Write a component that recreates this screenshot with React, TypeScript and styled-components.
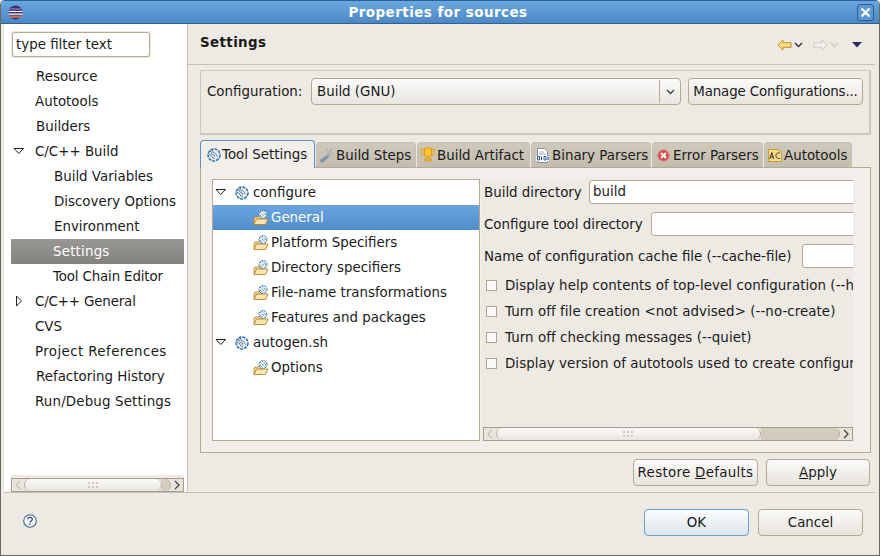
import React from 'react';
import styled, { createGlobalStyle } from 'styled-components';

const GlobalStyle = createGlobalStyle`
  html, body {
    margin: 0;
    padding: 0;
    background: #ede9e3;
  }
  * {
    box-sizing: border-box;
  }
`;

const Window = styled.div`
  width: 880px;
  height: 556px;
  display: flex;
  flex-direction: column;
  background: #ede9e3;
  color: #1a1a1a;
  font-family: 'DejaVu Sans', sans-serif;
  font-size: 13.4px;
  border: 1px solid #6b675e;
  border-top-color: #2f5f92;
  border-radius: 5px 5px 0 0;
  overflow: hidden;
  white-space: nowrap;
`;

const TitleBar = styled.div`
  height: 23px;
  flex: none;
  display: flex;
  align-items: center;
  justify-content: space-between;
  padding: 0 5px 0 7px;
  background: linear-gradient(#69a7e0, #4d88c5);
  border-bottom: 1px solid #30628f;
  color: #fff;
  font-weight: bold;
`;

const TitleText = styled.span`
  letter-spacing: 0.5px;
  margin-right: 4px;
`;

const CloseButton = styled.div`
  width: 17px;
  height: 17px;
  display: flex;
  align-items: center;
  justify-content: center;
  border: 1px solid #2f5f92;
  border-radius: 3px;
  background: #5a97d3;
`;

const Body = styled.div`
  flex: 1;
  min-height: 0;
  display: flex;
  padding: 0 3px;
`;

const Sidebar = styled.div`
  width: 183px;
  flex: none;
  display: flex;
  flex-direction: column;
  background: #fff;
  padding: 7px 3px 0 7px;
`;

const FilterWrap = styled.div`
  width: 140px;
  height: 27px;
  flex: none;
  padding: 1px;
  background: #ede9e3;
  margin-bottom: 6px;
`;

const FilterInput = styled.div`
  height: 25px;
  line-height: 23px;
  padding-left: 3px;
  background: #fff;
  border: 1px solid #b3a994;
  border-radius: 3px;
`;

const TreeList = styled.div`
  flex: 1;
  min-height: 0;
`;

const Row = styled.div<{ $indent: number; $selected?: 'blue' | 'grey'; $tracking?: number }>`
  height: 25px;
  display: flex;
  align-items: center;
  position: relative;
  padding-left: ${({ $indent }) => $indent}px;
  letter-spacing: ${({ $tracking }) => $tracking ?? 0}px;
  color: ${({ $selected }) => ($selected ? '#fff' : 'inherit')};
  background: ${({ $selected }) =>
    $selected === 'blue'
      ? 'linear-gradient(#6aa5e0, #518dcb)'
      : $selected === 'grey'
        ? 'linear-gradient(#999894, #84827e)'
        : 'transparent'};
`;

const Twisty = styled.svg`
  position: absolute;
  left: 2px;
  top: 6px;
`;

const RowIcon = styled.span<{ $gap: number }>`
  display: inline-flex;
  margin-right: ${({ $gap }) => $gap}px;
`;

const TrackWrap = styled.div<{ $width: number }>`
  width: ${({ $width }) => $width}px;
  height: 17px;
  flex: none;
  padding-top: 3px;
  background: #ede9e3;
`;

const Track = styled.div`
  height: 14px;
  display: flex;
  align-items: stretch;
  background: #e8e4dc;
  border: 1px solid #a59e8f;
`;

const ScrollEnd = styled.div`
  width: 12px;
  flex: none;
  display: flex;
  align-items: center;
  justify-content: center;
`;

const Thumb = styled.div<{ $width: number }>`
  width: ${({ $width }) => $width}px;
  flex: none;
  display: flex;
  align-items: center;
  justify-content: center;
  border: 1px solid #b7b1a2;
  border-width: 0 1px;
  border-radius: 6px;
  background: linear-gradient(#fbfaf8, #e9e6e0);
`;

const Trough = styled.div`
  flex: 1;
  border-radius: 0 6px 6px 0;
  background: #d3cdbf;
  border-right: 1px solid #b7b1a2;
`;

const Main = styled.div`
  flex: 1;
  min-width: 0;
  display: flex;
  flex-direction: column;
  border-left: 1px solid #c6c1b5;
`;

const MainHeader = styled.div`
  height: 41px;
  flex: none;
  display: flex;
  align-items: center;
  justify-content: space-between;
  margin-right: 1px;
  padding: 0 13px 4px 12px;
  border-bottom: 1px solid #c6c1b5;
`;

const HeaderTitle = styled.span`
  font-weight: bold;
  letter-spacing: 0.4px;
`;

const HeaderTools = styled.div`
  display: flex;
  align-items: center;
  padding-top: 6px;
`;

const ToolGap = styled.span<{ $width: number }>`
  display: inline-block;
  width: ${({ $width }) => $width}px;
`;

const MainContent = styled.div`
  flex: 1;
  min-height: 0;
  display: flex;
  flex-direction: column;
  padding: 5px 5px 0 12px;
`;

const ConfigGroup = styled.div`
  height: 65px;
  flex: none;
  display: flex;
  align-items: flex-start;
  padding: 7px 6px 0 6px;
  border: 1px solid #cec9bd;
  border-right-width: 2px;
  border-bottom-width: 2px;
`;

const ConfigLabel = styled.span`
  width: 104px;
  height: 27px;
  line-height: 27px;
  flex: none;
`;

const Combo = styled.div`
  width: 370px;
  height: 27px;
  flex: none;
  display: flex;
  align-items: center;
  justify-content: space-between;
  padding-left: 5px;
  border: 1px solid #b3a994;
  border-radius: 4px;
  background: linear-gradient(#fcfbfa, #e9e6e0);
`;

const ComboArrow = styled.span`
  width: 21px;
  height: 23px;
  display: flex;
  align-items: center;
  justify-content: center;
  border-left: 1px solid #b3a994;
`;

const Button = styled.div<{ $width: number; $default?: boolean }>`
  width: ${({ $width }) => $width}px;
  height: 27px;
  flex: none;
  display: flex;
  align-items: center;
  justify-content: center;
  border: 1px solid ${({ $default }) => ($default ? '#6b9fd4' : '#b3a994')};
  border-radius: 4px;
  background: ${({ $default }) =>
    $default
      ? 'linear-gradient(#fbfcfd, #dde5ec)'
      : 'linear-gradient(#fcfbfa, #e7e3dc)'};
`;

const ManageButton = styled(Button)`
  margin-left: 7px;
  letter-spacing: -0.15px;
`;

const RestoreButton = styled(Button)`
  letter-spacing: 0.3px;
`;

const TabStrip = styled.div`
  height: 28px;
  flex: none;
  margin-top: 5px;
  display: flex;
  align-items: flex-end;
  position: relative;
`;

const Tab = styled.div<{ $width: number; $active?: boolean }>`
  width: ${({ $width }) => $width}px;
  height: ${({ $active }) => ($active ? 28 : 26)}px;
  flex: none;
  display: flex;
  align-items: center;
  padding-left: ${({ $active }) => ($active ? 5 : 2)}px;
  margin-right: 1px;
  border: 1px solid ${({ $active }) => ($active ? '#5d90c4' : '#c6c1b5')};
  border-bottom: ${({ $active }) => ($active ? 'none' : '1px solid #b3a994')};
  border-radius: 4px 4px 0 0;
  background: ${({ $active }) =>
    $active ? '#f2efeb' : 'linear-gradient(#cfc9bc, #c3bdaf)'};
  position: relative;
  z-index: ${({ $active }) => ($active ? 2 : 1)};
`;

const TabIcon = styled.span<{ $slot: number }>`
  width: ${({ $slot }) => $slot}px;
  flex: none;
  display: inline-flex;
  justify-content: center;
  margin-right: 1px;
`;

const TabPane = styled.div`
  width: 671px;
  height: 286px;
  flex: none;
  margin-top: -1px;
  display: flex;
  padding: 11px 17px 11px 11px;
  background: #f2efeb;
  border: 1px solid #b3a994;
`;

const ToolTree = styled.div`
  width: 268px;
  flex: none;
  background: #fff;
  border: 1px solid #b3a994;
`;

const FormPanel = styled.div`
  flex: 1;
  min-width: 0;
  margin-left: 1px;
  display: flex;
  flex-direction: column;
  overflow: hidden;
  background: #ede9e3;
`;

const FormBody = styled.div`
  flex: 1;
  min-height: 0;
  padding: 1px 0 0 3px;
  overflow: hidden;
`;

const FieldGroup = styled.div`
  display: flex;
  flex-direction: column;
  gap: 8px;
  margin-bottom: 4px;
`;

const FieldRow = styled.div`
  height: 24px;
  display: flex;
  align-items: center;
`;

const FieldLabel = styled.span<{ $width: number }>`
  width: ${({ $width }) => $width}px;
  flex: none;
`;

const FieldInput = styled.div`
  flex: none;
  width: 500px;
  height: 24px;
  line-height: 22px;
  padding-left: 3px;
  background: #fff;
  border: 1px solid #b3a994;
  border-radius: 3px;
`;

const CheckRow = styled.div`
  height: 26px;
  display: flex;
  align-items: center;
  padding-left: 2px;
  letter-spacing: 0.06px;
`;

const CheckBox = styled.span`
  width: 11px;
  height: 11px;
  flex: none;
  margin-right: 8px;
  background: #fbfaf8;
  border: 1px solid #ada694;
`;

const FormScroll = styled.div`
  padding-left: 2px;
`;

const ActionRow = styled.div`
  flex: none;
  display: flex;
  justify-content: flex-end;
  gap: 8px;
  margin-top: 6px;
  padding-right: 1px;
`;

const Footer = styled.div`
  height: 63px;
  flex: none;
  display: flex;
  align-items: flex-start;
  justify-content: space-between;
  padding: 16px 12px 0 19px;
  border-top: 1px solid #c6c1b5;
  margin: 0 4px 0 3px;
`;

const HelpButton = styled.div`
  display: flex;
  padding-top: 5px;
`;

const FooterButtons = styled.div`
  display: flex;
  gap: 9px;
`;

const Arrow = ({ open }: { open: boolean }) => (
  <Twisty width="12" height="12" viewBox="0 0 12 12">
    {open ? (
      <path d="M1 3.5h9.5L5.8 8.5z" fill="#fff" stroke="#222" strokeWidth="1" />
    ) : (
      <path d="M3.5 1v10L8.5 6z" fill="#fff" stroke="#222" strokeWidth="1" />
    )}
  </Twisty>
);

const Wheel = () => (
  <svg width="14" height="14" viewBox="0 0 14 14">
    <circle cx="7" cy="7" r="6" fill="#e6eff7" stroke="#2f77b3" strokeWidth="1.500" strokeDasharray="3 1" />
    <path d="M3 3l7 8M5 2.500l6 6M2.500 6l5 5" stroke="#2b4f72" strokeWidth="1.200" strokeDasharray="1 1" />
    <circle cx="9" cy="9.500" r="1" fill="#fff" />
  </svg>
);

const FolderWheel = () => (
  <svg width="16" height="16" viewBox="0 0 16 16">
    <path d="M1 14V8.500l1-1.500h3l1-1h3v3h-3z" fill="#f6d596" stroke="#b8812c" strokeWidth="0.800" />
    <path d="M1 14.500l2.500-5.500h11.500L12.500 14.500z" fill="#fbe4ae" stroke="#b8812c" strokeWidth="0.900" />
    <circle cx="10" cy="4.500" r="4" fill="#f2f6fa" stroke="#2f77b3" strokeWidth="1" strokeDasharray="2 0.800" />
    <path d="M7.500 2.500l5 4.500M9.500 1.500l3.500 3.500M7 5l3 3" stroke="#2b4f72" strokeWidth="1" strokeDasharray="1 1" />
  </svg>
);

const Wrench = () => (
  <svg width="16" height="16" viewBox="0 0 16 16">
    <path d="M1 13l7-5 2 2-6 5.500H2z" fill="#7f93a8" />
    <path d="M7 7.500l2-2 3 3-2 2z" fill="#9db0c0" />
    <path d="M8 3l1-1M11 3.500l2-1M12 6l2.500-.5M9.500 5l4-3" stroke="#7f95aa" strokeWidth="1" strokeDasharray="1.500 1" />
  </svg>
);

const Trophy = () => (
  <svg width="16" height="16" viewBox="0 0 16 16">
    <path d="M1.500 2.500h13v3c0 1.500-1.500 3-3 3h-7c-1.500 0-3-1.500-3-3z" fill="none" stroke="#eea91e" strokeWidth="1.300" />
    <path d="M4.500 1h7v6c0 1.500-1.500 3-3.500 3s-3.500-1.500-3.500-3z" fill="#fcc72f" stroke="#d9920f" strokeWidth="0.800" />
    <path d="M7 10h2v2h2.500v2h-7v-2H7z" fill="#f1b524" stroke="#d9920f" strokeWidth="0.600" />
  </svg>
);

const BinaryFile = () => (
  <svg width="13" height="15" viewBox="0 0 13 15">
    <path d="M1.500.5h7l3 3v11h-10z" fill="#fff" stroke="#8191a6" strokeWidth="1" />
    <path d="M3 4h5M3 6h7" stroke="#9fb0c4" strokeWidth="1" />
    <path d="M0 8h13v5H0z" fill="#fff" />
    <path d="M1.500 8.500h2v3.500h-2zM8 8.500h2v3.500H8z" fill="none" stroke="#2f5f9a" strokeWidth="1" />
    <path d="M5.500 8.500V12M12 8.500V12" stroke="#2f5f9a" strokeWidth="1.200" />
  </svg>
);

const ErrorIcon = () => (
  <svg width="13" height="13" viewBox="0 0 13 13">
    <circle cx="6.500" cy="6.500" r="5.700" fill="#e0474f" stroke="#e3858c" strokeWidth="1" />
    <path d="M4 4l5 5M9 4l-5 5" stroke="#fff" strokeWidth="2" />
  </svg>
);

const AcIcon = () => (
  <svg width="14" height="14" viewBox="0 0 14 14">
    <path d="M.5 1.500h9.500l3.500 3v9H.5z" fill="#fbdc86" stroke="#c79a32" strokeWidth="1" />
    <path d="M1.800 11l2-6.500 2 6.500M2.600 9h2.400" fill="none" stroke="#333" strokeWidth="1" />
    <path d="M12 5.500c-1-1-4-1-4 2s3 3.500 4 2.500" fill="none" stroke="#333" strokeWidth="1" />
  </svg>
);

const EclipseLogo = () => (
  <svg width="15" height="15" viewBox="0 0 15 15">
    <circle cx="7.500" cy="7.500" r="7" fill="#3e2f7c" />
    <path d="M.5 6h14v1H.5zM.5 8.500h14v1.200H.5z" fill="#fff" />
    <path d="M2 3h11l1 2.500H1z" fill="#6a5ea8" />
    <path d="M1 10.500h13l-1.500 2.500h-10z" fill="#e58e4d" opacity="0.7" />
  </svg>
);

const CloseGlyph = () => (
  <svg width="11" height="11" viewBox="0 0 11 11">
    <path d="M1.500 1.500l8 8M9.500 1.500l-8 8" stroke="#fff" strokeWidth="2.400" />
  </svg>
);

const BackArrow = () => (
  <svg width="15" height="12" viewBox="0 0 15 12">
    <path d="M.8 6L6 1v2.700h8v4.600H6V11z" fill="#fde08a" stroke="#c98a1d" strokeWidth="1" />
  </svg>
);

const ForwardArrow = () => (
  <svg width="15" height="12" viewBox="0 0 15 12">
    <path d="M14.200 6L9 1v2.700H1v4.600h8V11z" fill="#f2f0ec" stroke="#cfcbc4" strokeWidth="1" />
  </svg>
);

const Chevron = ({ color }: { color: string }) => (
  <svg width="9" height="6" viewBox="0 0 9 6">
    <path d="M1 1l3.500 3.500L8 1" fill="none" stroke={color} strokeWidth="1.400" />
  </svg>
);

const ViewMenu = () => (
  <svg width="10" height="6" viewBox="0 0 10 6">
    <path d="M0 0h10L5 5.500z" fill="#2f2a5c" />
  </svg>
);

const HelpIcon = () => (
  <svg width="14" height="14" viewBox="0 0 14 14">
    <circle cx="7" cy="7" r="6.300" fill="#f5f7fa" stroke="#3d6392" strokeWidth="1.100" />
    <path d="M4.800 5.300c0-2.700 4.500-2.700 4.500 0 0 1.700-2.300 1.700-2.300 3.200" fill="none" stroke="#2f5280" strokeWidth="1.300" />
    <path d="M6.300 9.600h1.400v1.400H6.300z" fill="#2f5280" />
  </svg>
);

const ScrollLeft = () => (
  <svg width="8" height="10" viewBox="0 0 8 10">
    <path d="M6 1L2 5l4 4" fill="none" stroke="#c8c4bb" strokeWidth="1.300" />
  </svg>
);

const ScrollRight = () => (
  <svg width="8" height="10" viewBox="0 0 8 10">
    <path d="M2 1l4 4-4 4" fill="none" stroke="#444" strokeWidth="1.300" />
  </svg>
);

const Grip = () => (
  <svg width="11" height="6" viewBox="0 0 11 6">
    <path d="M0 0h2v2H0zM4 0h2v2H4zM8 0h2v2H8zM0 4h2v2H0zM4 4h2v2H4zM8 4h2v2H8z" fill="#cfcabf" />
  </svg>
);

const ScrollBar = ({ width, thumb }: { width: number; thumb: number }) => (
  <TrackWrap $width={width}>
    <Track>
      <ScrollEnd>
        <ScrollLeft />
      </ScrollEnd>
      <Thumb $width={thumb}>
        <Grip />
      </Thumb>
      <Trough />
      <ScrollEnd>
        <ScrollRight />
      </ScrollEnd>
    </Track>
  </TrackWrap>
);

const sidebarItems: {
  label: string;
  indent: number;
  twisty?: boolean;
  open?: boolean;
  selected?: boolean;
  tracking?: number;
}[] = [
  { label: 'Resource', indent: 25 },
  { label: 'Autotools', indent: 24 },
  { label: 'Builders', indent: 25 },
  { label: 'C/C++ Build', indent: 24, twisty: true, open: true },
  { label: 'Build Variables', indent: 43 },
  { label: 'Discovery Options', indent: 43 },
  { label: 'Environment', indent: 43 },
  { label: 'Settings', indent: 42, selected: true, tracking: 0.2 },
  { label: 'Tool Chain Editor', indent: 42, tracking: -0.15 },
  { label: 'C/C++ General', indent: 24, twisty: true, open: false, tracking: -0.15 },
  { label: 'CVS', indent: 24 },
  { label: 'Project References', indent: 24, tracking: 0.4 },
  { label: 'Refactoring History', indent: 25 },
  { label: 'Run/Debug Settings', indent: 24, tracking: 0.15 },
];

const tabs = [
  { label: 'Tool Settings', width: 115, slot: 15, icon: <Wheel />, active: true },
  { label: 'Build Steps', width: 100, slot: 16, icon: <Wrench /> },
  { label: 'Build Artifact', width: 113, slot: 16, icon: <Trophy /> },
  { label: 'Binary Parsers', width: 120, slot: 17, icon: <BinaryFile /> },
  { label: 'Error Parsers', width: 111, slot: 17, icon: <ErrorIcon /> },
  { label: 'Autotools', width: 88, slot: 16, icon: <AcIcon /> },
];

const toolItems: { label: string; root?: boolean; selected?: boolean }[] = [
  { label: 'configure', root: true },
  { label: 'General', selected: true },
  { label: 'Platform Specifiers' },
  { label: 'Directory specifiers' },
  { label: 'File-name transformations' },
  { label: 'Features and packages' },
  { label: 'autogen.sh', root: true },
  { label: 'Options' },
];

const checks = [
  'Display help contents of top-level configuration (--help)',
  'Turn off file creation <not advised> (--no-create)',
  'Turn off checking messages (--quiet)',
  'Display version of autotools used to create configure (--version)',
];

export default function App() {
  return (
    <Window>
      <GlobalStyle />
      <TitleBar>
        <EclipseLogo />
        <TitleText>Properties for sources</TitleText>
        <CloseButton>
          <CloseGlyph />
        </CloseButton>
      </TitleBar>
      <Body>
        <Sidebar>
          <FilterWrap>
            <FilterInput>type filter text</FilterInput>
          </FilterWrap>
          <TreeList>
            {sidebarItems.map((item) => (
              <Row
                key={item.label}
                $indent={item.indent}
                $selected={item.selected ? 'grey' : undefined}
                $tracking={item.tracking}
              >
                {item.twisty && <Arrow open={!!item.open} />}
                {item.label}
              </Row>
            ))}
          </TreeList>
          <ScrollBar width={173} thumb={138} />
        </Sidebar>
        <Main>
          <MainHeader>
            <HeaderTitle>Settings</HeaderTitle>
            <HeaderTools>
              <BackArrow />
              <ToolGap $width={2} />
              <Chevron color="#333" />
              <ToolGap $width={10} />
              <ForwardArrow />
              <ToolGap $width={2} />
              <Chevron color="#cfcbc4" />
              <ToolGap $width={13} />
              <ViewMenu />
            </HeaderTools>
          </MainHeader>
          <MainContent>
            <ConfigGroup>
              <ConfigLabel>Configuration:</ConfigLabel>
              <Combo>
                Build (GNU)
                <ComboArrow>
                  <Chevron color="#444" />
                </ComboArrow>
              </Combo>
              <ManageButton $width={175}>Manage Configurations...</ManageButton>
            </ConfigGroup>
            <TabStrip>
              {tabs.map((tab) => (
                <Tab key={tab.label} $width={tab.width} $active={tab.active}>
                  <TabIcon $slot={tab.slot}>{tab.icon}</TabIcon>
                  {tab.label}
                </Tab>
              ))}
            </TabStrip>
            <TabPane>
              <ToolTree>
                {toolItems.map((item) =>
                  item.root ? (
                    <Row key={item.label} $indent={22}>
                      <Arrow open />
                      <RowIcon $gap={4}>
                        <Wheel />
                      </RowIcon>
                      {item.label}
                    </Row>
                  ) : (
                    <Row key={item.label} $indent={40} $selected={item.selected ? 'blue' : undefined}>
                      <RowIcon $gap={2}>
                        <FolderWheel />
                      </RowIcon>
                      {item.label}
                    </Row>
                  ),
                )}
              </ToolTree>
              <FormPanel>
                <FormBody>
                  <FieldGroup>
                    <FieldRow>
                      <FieldLabel $width={105}>Build directory</FieldLabel>
                      <FieldInput>build</FieldInput>
                    </FieldRow>
                    <FieldRow>
                      <FieldLabel $width={167}>Configure tool directory</FieldLabel>
                      <FieldInput />
                    </FieldRow>
                    <FieldRow>
                      <FieldLabel $width={318}>Name of configuration cache file (--cache-file)</FieldLabel>
                      <FieldInput />
                    </FieldRow>
                  </FieldGroup>
                  {checks.map((label) => (
                    <CheckRow key={label}>
                      <CheckBox />
                      {label}
                    </CheckRow>
                  ))}
                </FormBody>
                <FormScroll>
                  <ScrollBar width={370} thumb={265} />
                </FormScroll>
              </FormPanel>
            </TabPane>
            <ActionRow>
              <RestoreButton $width={125}>
                <span>
                  Restore <u>D</u>efaults
                </span>
              </RestoreButton>
              <Button $width={104}>
                <span>
                  <u>A</u>pply
                </span>
              </Button>
            </ActionRow>
          </MainContent>
        </Main>
      </Body>
      <Footer>
        <HelpButton>
          <HelpIcon />
        </HelpButton>
        <FooterButtons>
          <Button $width={105} $default>
            OK
          </Button>
          <Button $width={105}>Cancel</Button>
        </FooterButtons>
      </Footer>
    </Window>
  );
}
